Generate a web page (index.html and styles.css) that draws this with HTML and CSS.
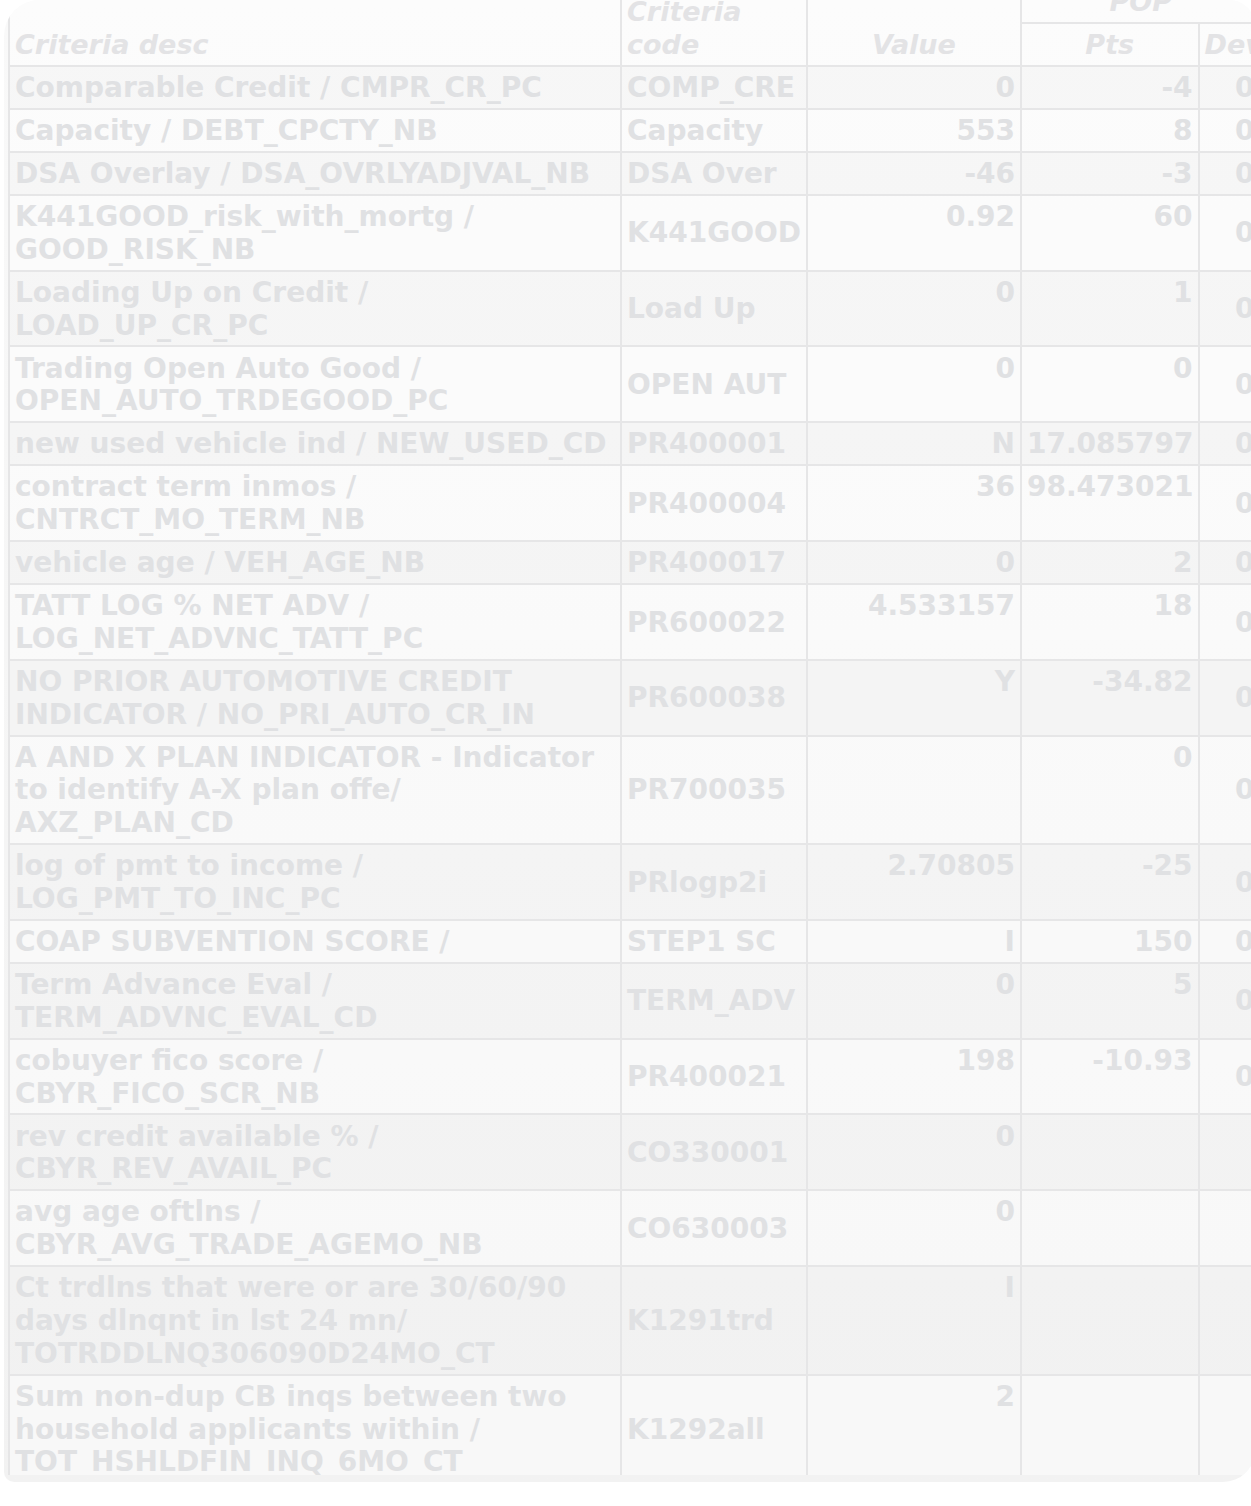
FILE: index.html
```html
<!DOCTYPE html>
<html lang="en">
<head>
<meta charset="utf-8">
<title>Criteria table</title>
<link rel="stylesheet" href="styles.css">
</head>
<body>
<div class="card">
  <div class="scroller">
    <table class="grid">
      <colgroup>
        <col class="c-desc">
        <col class="c-code">
        <col class="c-val">
        <col class="c-pts">
        <col class="c-dev">
      </colgroup>
      <thead>
        <tr>
          <th rowspan="2" class="h-left">Criteria desc</th>
          <th rowspan="2" class="h-left">Criteria<br>code</th>
          <th rowspan="2" class="h-center">Value</th>
          <th colspan="2" class="h-center">POP</th>
        </tr>
        <tr>
          <th class="h-center">Pts</th>
          <th class="h-center">Dev</th>
        </tr>
      </thead>
      <tbody>
        <tr><td class="desc">Comparable Credit / CMPR_CR_PC</td><td class="code">COMP_CRE</td><td class="num">0</td><td class="num">-4</td><td class="dev">0</td></tr>
        <tr><td class="desc">Capacity / DEBT_CPCTY_NB</td><td class="code">Capacity</td><td class="num">553</td><td class="num">8</td><td class="dev">0</td></tr>
        <tr><td class="desc">DSA Overlay / DSA_OVRLYADJVAL_NB</td><td class="code">DSA Over</td><td class="num">-46</td><td class="num">-3</td><td class="dev">0</td></tr>
        <tr><td class="desc">K441GOOD_risk_with_mortg /<br>GOOD_RISK_NB</td><td class="code">K441GOOD</td><td class="num">0.92</td><td class="num">60</td><td class="dev">0</td></tr>
        <tr><td class="desc">Loading Up on Credit /<br>LOAD_UP_CR_PC</td><td class="code">Load Up</td><td class="num">0</td><td class="num">1</td><td class="dev">0</td></tr>
        <tr><td class="desc">Trading Open Auto Good /<br>OPEN_AUTO_TRDEGOOD_PC</td><td class="code">OPEN AUT</td><td class="num">0</td><td class="num">0</td><td class="dev">0</td></tr>
        <tr><td class="desc">new used vehicle ind / NEW_USED_CD</td><td class="code">PR400001</td><td class="num">N</td><td class="num">17.085797</td><td class="dev">0</td></tr>
        <tr><td class="desc">contract term inmos /<br>CNTRCT_MO_TERM_NB</td><td class="code">PR400004</td><td class="num">36</td><td class="num">98.473021</td><td class="dev">0</td></tr>
        <tr><td class="desc">vehicle age / VEH_AGE_NB</td><td class="code">PR400017</td><td class="num">0</td><td class="num">2</td><td class="dev">0</td></tr>
        <tr><td class="desc">TATT LOG % NET ADV /<br>LOG_NET_ADVNC_TATT_PC</td><td class="code">PR600022</td><td class="num">4.533157</td><td class="num">18</td><td class="dev">0</td></tr>
        <tr><td class="desc">NO PRIOR AUTOMOTIVE CREDIT<br>INDICATOR / NO_PRI_AUTO_CR_IN</td><td class="code">PR600038</td><td class="num">Y</td><td class="num">-34.82</td><td class="dev">0</td></tr>
        <tr><td class="desc">A AND X PLAN INDICATOR - Indicator<br>to identify A-X plan offe/<br>AXZ_PLAN_CD</td><td class="code">PR700035</td><td class="num"></td><td class="num">0</td><td class="dev">0</td></tr>
        <tr><td class="desc">log of pmt to income /<br>LOG_PMT_TO_INC_PC</td><td class="code">PRlogp2i</td><td class="num">2.70805</td><td class="num">-25</td><td class="dev">0</td></tr>
        <tr><td class="desc">COAP SUBVENTION SCORE /</td><td class="code">STEP1 SC</td><td class="num">I</td><td class="num">150</td><td class="dev">0</td></tr>
        <tr><td class="desc">Term Advance Eval /<br>TERM_ADVNC_EVAL_CD</td><td class="code">TERM_ADV</td><td class="num">0</td><td class="num">5</td><td class="dev">0</td></tr>
        <tr><td class="desc">cobuyer fico score /<br>CBYR_FICO_SCR_NB</td><td class="code">PR400021</td><td class="num">198</td><td class="num">-10.93</td><td class="dev">0</td></tr>
        <tr><td class="desc">rev credit available % /<br>CBYR_REV_AVAIL_PC</td><td class="code">CO330001</td><td class="num">0</td><td class="num"></td><td class="dev"></td></tr>
        <tr><td class="desc">avg age oftlns /<br>CBYR_AVG_TRADE_AGEMO_NB</td><td class="code">CO630003</td><td class="num">0</td><td class="num"></td><td class="dev"></td></tr>
        <tr><td class="desc">Ct trdlns that were or are 30/60/90<br>days dlnqnt in lst 24 mn/<br>TOTRDDLNQ306090D24MO_CT</td><td class="code">K1291trd</td><td class="num">I</td><td class="num"></td><td class="dev"></td></tr>
        <tr><td class="desc">Sum non-dup CB inqs between two<br>household applicants within /<br>TOT_HSHLDFIN_INQ_6MO_CT</td><td class="code">K1292all</td><td class="num">2</td><td class="num"></td><td class="dev"></td></tr>
      </tbody>
    </table>
  </div>
</div>
</body>
</html>
```

FILE: styles.css
```css
html, body {
  margin: 0;
  padding: 0;
  background: #ffffff;
}

body {
  font-family: "DejaVu Sans", Verdana, sans-serif;
  overflow: hidden;
}

.card {
  width: 1247px;
  height: 1475px;
  margin-left: 4px;
  padding: 0 0 7px 4px;
  box-sizing: content-box;
  border-radius: 36px 26px 32px 10px;
  overflow: hidden;
  background: linear-gradient(#f9f9f9, #f2f2f2);
}

.scroller {
  height: 1475px;
  overflow: hidden;
}

.grid {
  margin-top: -21px;
  border-collapse: collapse;
  table-layout: fixed;
  width: 1251.5px;
  font-size: 28px;
  font-weight: bold;
  line-height: 32.8px;
  color: #e0e1e3;
}

.c-desc { width: 612px; }
.c-code { width: 186px; }
.c-val { width: 214px; }
.c-pts { width: 177.5px; }
.c-dev { width: 62px; }

.grid th,
.grid td {
  border: 2px solid #e6e6e7;
  padding: 5.1px 5px 3.1px;
  white-space: nowrap;
}

.grid th {
  font-size: 27px;
  font-style: italic;
  font-weight: bold;
  color: #e3e3e5;
  vertical-align: bottom;
  background: rgba(255, 255, 255, 0.45);
}

.h-left { text-align: left; }
.h-center { text-align: center; }

.grid tbody tr:nth-child(odd) td {
  background: rgba(238, 240, 240, 0.2);
}

.grid tbody tr:nth-child(even) td {
  background: rgba(255, 255, 255, 0.45);
}

.desc,
.code {
  text-align: left;
  vertical-align: middle;
}

.num {
  text-align: right;
  vertical-align: top;
}

.dev {
  text-align: right;
  vertical-align: middle;
}
```
